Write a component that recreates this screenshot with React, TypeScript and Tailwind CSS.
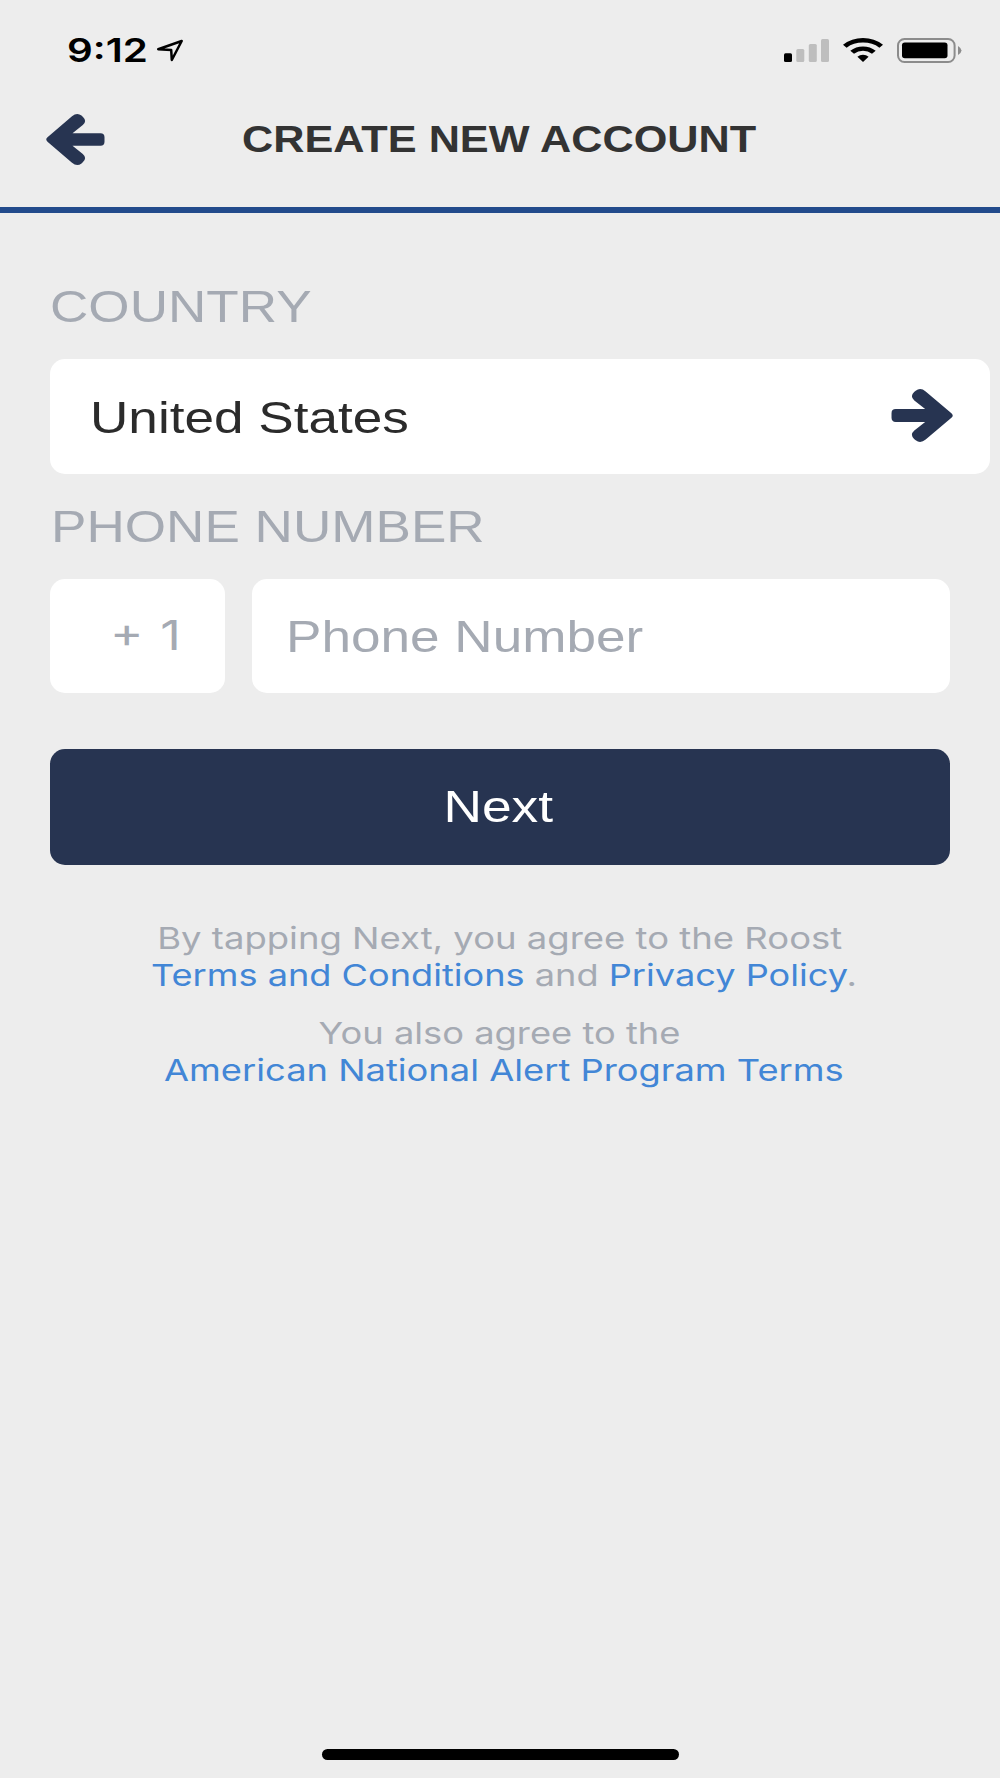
import type { ReactNode } from 'react'
import { clsx } from 'clsx'

const helvetica = 'font-["Liberation_Sans",Arial,sans-serif]'
const system = 'font-[Inter,Roboto,sans-serif]'

// Wide text: the label keeps its height and is stretched sideways
function Wide({ className, children }: { className?: string; children: ReactNode }) {
  return (
    <span className={clsx('block whitespace-nowrap leading-none', className)}>
      {children}
    </span>
  )
}

function Arrow({ className }: { className?: string }) {
  return (
    <svg viewBox="0 0 59 51" preserveAspectRatio="none" className={clsx('shrink-0 fill-[#273451]', className)}>
      <path d="M1.5 23.3L26 2.3Q31 -1.8 35.5 1.6L37 2.9Q41.3 7 36.8 11L26.5 19.3H54.5Q58.5 19.3 58.5 23.3V27.7Q58.5 31.7 54.5 31.7H26.5L36.8 40Q41.3 44 37 48.1L35.5 49.4Q31 52.8 26 48.7L1.5 27.7Q-1 25.5 1.5 23.3Z" />
    </svg>
  )
}

function StatusBar() {
  return (
    <div className="flex h-[100px] items-start justify-between pl-[67px] pr-[38px] pt-[34px]">
      <div className="flex items-start">
        <div className="flex w-[89px] pt-px">
          <Wide className={clsx(system, 'origin-left scale-x-[1.24] text-[32.5px] font-semibold text-black')}>9:12</Wide>
        </div>
        <svg width="28" height="24" viewBox="0 0 28 24" className="mt-1 fill-none stroke-black stroke-[2.5]">
          <path d="M2.2 11.2L25.7 3L15.8 22L15.2 12Z" strokeLinejoin="round" />
        </svg>
      </div>
      <div className="flex items-start gap-[14px] pt-1">
        <svg width="45" height="25" viewBox="0 0 45 25" className="fill-[#bebebe]">
          <rect x="0" y="15.3" width="8" height="8.7" rx="1.5" className="fill-black" />
          <rect x="12.3" y="11" width="8" height="13" rx="1.5" />
          <rect x="24.8" y="6" width="8" height="18" rx="1.5" />
          <rect x="37" y="1" width="8" height="23" rx="1.5" />
        </svg>
        <svg width="40" height="25" viewBox="0 0 40 25" className="fill-black">
          <path d="M0 6.8Q8.5 0 20 0T40 6.8L36.4 9.7Q29.5 4.6 20 4.6T3.6 9.7Z" />
          <path d="M7.3 12.8Q12.8 8.4 20 8.4T32.7 12.8L29 15.8Q25 12.8 20 12.8T11 15.8Z" />
          <path d="M14.4 18.8Q16.8 16.8 20 16.8T25.6 18.8L20 24Z" />
        </svg>
        <svg width="65" height="25" viewBox="0 0 65 25">
          <rect x="1" y="1" width="56.6" height="23" rx="6.5" className="fill-none stroke-[#8c8c8c] stroke-2" />
          <rect x="5" y="4.5" width="45.5" height="15.8" rx="2.8" className="fill-black" />
          <path d="M61 8Q68 12.5 61 17Z" className="fill-[#8c8c8c]" />
        </svg>
      </div>
    </div>
  )
}

export default function App() {
  return (
    <div className={clsx(helvetica, 'flex h-[1778px] w-[1000px] flex-col overflow-hidden bg-[#ededed] text-[45px] text-[#a5aab3]')}>
      <header className="h-[213px] border-b-6 border-[#224b8c]">
        <StatusBar />
        <div className="flex items-start pl-[46px] pt-[14px]">
          <Arrow className="h-[51px] w-[59px]" />
          <h1 className="ml-[137px] flex pt-2">
            <Wide className="origin-left scale-x-[1.185] text-[36.5px] font-bold text-[#333]">CREATE NEW ACCOUNT</Wide>
          </h1>
        </div>
      </header>

      <main className="flex flex-col pl-[50px] pr-[50px] pt-[71px]">
        <label className="flex h-[75px]">
          <Wide className="origin-left scale-x-[1.18]">COUNTRY</Wide>
        </label>
        <button className="-mr-10 flex h-[115px] items-start justify-between rounded-[15px] bg-white pl-10 pr-[37px] text-left">
          <Wide className="mt-9 origin-left scale-x-[1.18] text-[#2b2b2b]">United States</Wide>
          <Arrow className="mt-[30px] h-[53px] w-[62px] -scale-x-100" />
        </button>

        <label className="mt-[30px] flex h-[75px] pl-px">
          <Wide className="origin-left scale-x-[1.18]">PHONE NUMBER</Wide>
        </label>
        <div className="flex gap-[27px]">
          <div className="flex h-[114px] w-[175px] items-start rounded-[15px] bg-white pl-[60px] pt-9">
            <Wide className={clsx(system, 'origin-left scale-x-[1.22] text-[41.5px] [word-spacing:2px]')}>+ 1</Wide>
          </div>
          <div className="flex h-[114px] flex-1 items-start rounded-[15px] bg-white pl-[34px] pt-[35px]">
            <Wide className="origin-left scale-x-[1.18]">Phone Number</Wide>
          </div>
        </div>

        <button className="mt-14 flex h-[116px] items-start justify-center rounded-[15px] bg-[#273451] pr-[3px] pt-[35px] text-white">
          <Wide className="scale-x-[1.185]">Next</Wide>
        </button>

        <div className={clsx(system, 'mt-[58px] flex flex-col items-center text-[30px]')}>
          <p className="flex h-[37px] pr-px">
            <Wide className="scale-x-[1.216]">By tapping Next, you agree to the Roost</Wide>
          </p>
          <p className="flex h-[58px] pl-2">
            <Wide className="scale-x-[1.205]">
              <a className="text-[#4286d6]">Terms and Conditions</a> and <a className="text-[#4286d6]">Privacy Policy</a>.
            </Wide>
          </p>
          <p className="flex h-[37px] pr-px">
            <Wide className="scale-x-[1.21]">You also agree to the</Wide>
          </p>
          <p className="flex h-[37px] pl-2">
            <Wide className="scale-x-[1.21] text-[#4286d6]">American National Alert Program Terms</Wide>
          </p>
        </div>
      </main>

      {/* Home indicator */}
      <div className="mx-auto mb-[18px] mt-auto h-[11px] w-[357px] rounded-full bg-black" />
    </div>
  )
}
